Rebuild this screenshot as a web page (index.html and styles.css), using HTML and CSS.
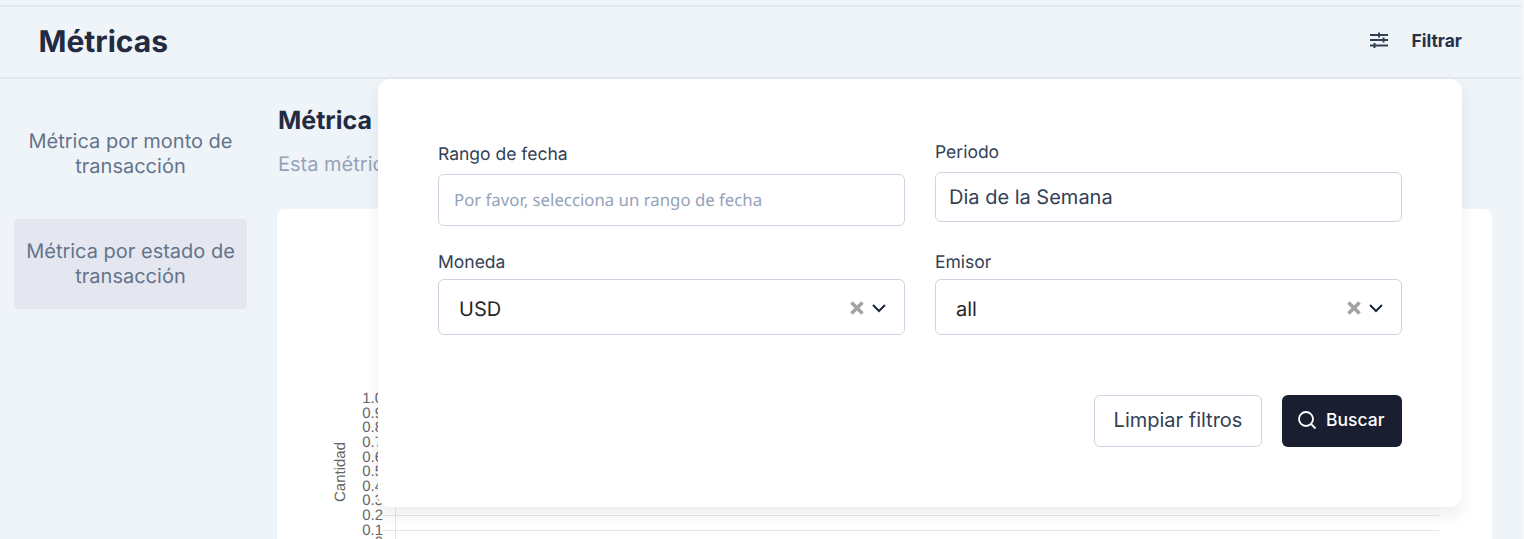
FILE: index.html
```html
<!DOCTYPE html>
<html lang="es">
<head>
<meta charset="utf-8">
<title>Métricas</title>
<link rel="stylesheet" href="styles.css">
</head>
<body>
<div class="page">
  <header class="topbar">
    <h1 class="page-title">Métricas</h1>
    <button class="filter-toggle" type="button">
      <svg class="icon-sliders" width="18" height="16" viewBox="0 0 18 16" fill="none" stroke="#334155">
        <path d="M0 3h18M0 8h18M0 13.500h18" stroke-width="1.800"/>
        <path d="M9 .5v5M13.500 5.500v5M4.500 11v5" stroke-width="2"/>
      </svg>
      <span>Filtrar</span>
    </button>
  </header>

  <div class="layout">
    <nav class="sidebar">
      <a class="side-item">Métrica por monto de transacción</a>
      <a class="side-item is-active">Métrica por estado de transacción</a>
    </nav>
    <main class="content">
      <h2 class="section-title">Métrica por estado de transacción</h2>
      <p class="section-desc">Esta métrica muestra la cantidad de transacciones por estado</p>
      <section class="chart-card">
        <svg class="chart" width="1215" height="360" viewBox="0 0 1215 360">
          <g class="grid">
            <path d="M106 306.500h1056M106 321.500h1056M118.500 290v70"/>
          </g>
          <text class="axis-title" transform="translate(68 263) rotate(-90)" text-anchor="middle">Cantidad</text>
          <g class="ticks" text-anchor="end">
            <text x="106" y="194">1.0</text>
            <text x="106" y="209">0.9</text>
            <text x="106" y="223">0.8</text>
            <text x="106" y="238">0.7</text>
            <text x="106" y="253">0.6</text>
            <text x="106" y="267">0.5</text>
            <text x="106" y="282">0.4</text>
            <text x="106" y="296">0.3</text>
            <text x="106" y="311">0.2</text>
            <text x="106" y="326">0.1</text>
            <text x="106" y="338">0</text>
          </g>
        </svg>
      </section>
    </main>
  </div>

  <form class="filter-panel">
    <div class="filter-grid">
      <div class="field field-date">
        <label class="field-label">Rango de fecha</label>
        <div class="date-input">Por favor, selecciona un rango de fecha</div>
      </div>
      <div class="field">
        <label class="field-label">Periodo</label>
        <div class="text-input">Dia de la Semana</div>
      </div>
      <div class="field">
        <label class="field-label field-label-tight">Moneda</label>
        <div class="select-input">
          <span class="select-value">USD</span>
          <span class="select-icons">
            <svg width="14" height="14" viewBox="0 0 14 14"><path d="M1.500 1.500l11 11M12.500 1.500l-11 11" stroke="#a3a3a3" stroke-width="3.600"/></svg>
            <svg width="16" height="10" viewBox="0 0 16 10"><path d="M2 2l6 6 6-6" fill="none" stroke="#1e293b" stroke-width="2"/></svg>
          </span>
        </div>
      </div>
      <div class="field">
        <label class="field-label field-label-tight">Emisor</label>
        <div class="select-input">
          <span class="select-value">all</span>
          <span class="select-icons">
            <svg width="14" height="14" viewBox="0 0 14 14"><path d="M1.500 1.500l11 11M12.500 1.500l-11 11" stroke="#a3a3a3" stroke-width="3.600"/></svg>
            <svg width="16" height="10" viewBox="0 0 16 10"><path d="M2 2l6 6 6-6" fill="none" stroke="#1e293b" stroke-width="2"/></svg>
          </span>
        </div>
      </div>
    </div>
    <div class="filter-actions">
      <button class="btn btn-outline" type="button">Limpiar filtros</button>
      <button class="btn btn-dark" type="button">
        <svg width="20" height="20" viewBox="0 0 20 20" fill="none" stroke="#fff" stroke-width="1.800"><circle cx="9" cy="9" r="7"/><path d="M14 14l4.500 4.500"/></svg>
        <span>Buscar</span>
      </button>
    </div>
  </form>
</div>
</body>
</html>
```
FILE: styles.css
```css
* { box-sizing: border-box; }
html, body { margin: 0; height: 539px; overflow: hidden; background: #f5f6f7; }
body { font-family: Inter, "Liberation Sans", sans-serif; color: #1e293b; text-rendering: geometricPrecision; }

.page { position: relative; width: 1522px; height: 539px; overflow: hidden; padding-top: 5px; background: #eff4f9; }

.topbar {
  display: flex; align-items: center; justify-content: space-between;
  height: 74px; padding: 0 60px 2px 38.500px;
  border-top: 2px solid #e2e8f0; border-bottom: 2px solid #e2e8f0;
}
.page-title { margin: 0; padding-top: 2px; font-size: 30px; font-weight: 700; line-height: 36px; color: #232b42; }
.filter-toggle {
  display: flex; align-items: center; gap: 23px; padding: 0; border: 0; background: none;
  font: 700 17.500px/20px Inter, sans-serif; color: #283147;
}
.icon-sliders { display: block; margin-bottom: 2px; }

.layout { display: flex; gap: 30px; padding: 30px 30px 0 14px; }
.sidebar { display: flex; flex: 0 0 233px; flex-direction: column; gap: 20px; }
.side-item {
  display: block; padding: 20px 10px; border-radius: 4px; text-align: center;
  font-size: 20px; line-height: 25px; color: #64748b;
}
.side-item.is-active { background: #e4e7f0; }

.content { flex: 1; min-width: 0; }
.section-title { margin: 0; font-size: 25px; font-weight: 700; line-height: 24px; padding-left: 1px; white-space: nowrap; color: #232b42; }
.section-desc { margin: 19px 0 0; font-size: 20px; line-height: 24px; padding-left: 1px; white-space: nowrap; color: #94a3b8; }
.chart-card { margin-top: 33px; height: 400px; border-radius: 8px; background: #fff; }
.chart { display: block; }
.grid path { stroke: #e5e5e5; fill: none; }
.axis-title, .ticks text { font-family: "Liberation Sans", sans-serif; font-size: 15px; fill: #666; }

.filter-panel {
  position: absolute; left: 378px; top: 79px; width: 1084px; height: 428px;
  padding: 63px 60px 60px; border-radius: 12px; background: #fff;
  box-shadow: 0 8px 16px rgba(30, 41, 59, .08);
}
.filter-grid { display: grid; grid-template-columns: 467px 467px; column-gap: 30px; row-gap: 26px; }
.field { min-width: 0; }
.field-date { margin-top: 2px; }
.field-label { display: block; margin-bottom: 9px; padding-top: 1px; font-size: 17.500px; line-height: 20px; color: #334155; }
.field-label-tight { margin-bottom: 6px; }
.date-input, .text-input, .select-input { border: 1px solid #cbd5e1; border-radius: 6px; background: #fff; display: flex; align-items: center; }
.date-input { height: 52px; padding: 0 15px 2px; font-family: "Noto Sans", sans-serif; font-size: 16.800px; color: #94a3b8; }
.text-input { height: 50px; padding: 0 13px; font-size: 20px; color: #334155; }
.select-input { height: 56px; padding: 0 17px 0 20px; justify-content: space-between; font-size: 20px; color: #262626; }
.select-value { padding-top: 3px; }
.select-icons { display: flex; align-items: center; gap: 7px; padding-top: 1px; }
.select-icons svg { display: block; }

.filter-actions { display: flex; justify-content: flex-end; gap: 20px; margin-top: 60px; }
.btn { display: flex; align-items: center; height: 52px; border-radius: 6px; font-family: Inter, sans-serif; }
.btn-outline { justify-content: center; width: 168px; padding: 0 0 2px; border: 1px solid #cbd5e1; background: #fff; font-size: 20px; color: #334155; }
.btn-dark { justify-content: flex-start; width: 120px; gap: 9px; padding: 0 0 3px 15px; border: 0; background: #1a1e31; font-size: 17.500px; font-weight: 500; color: #fff; }
```
